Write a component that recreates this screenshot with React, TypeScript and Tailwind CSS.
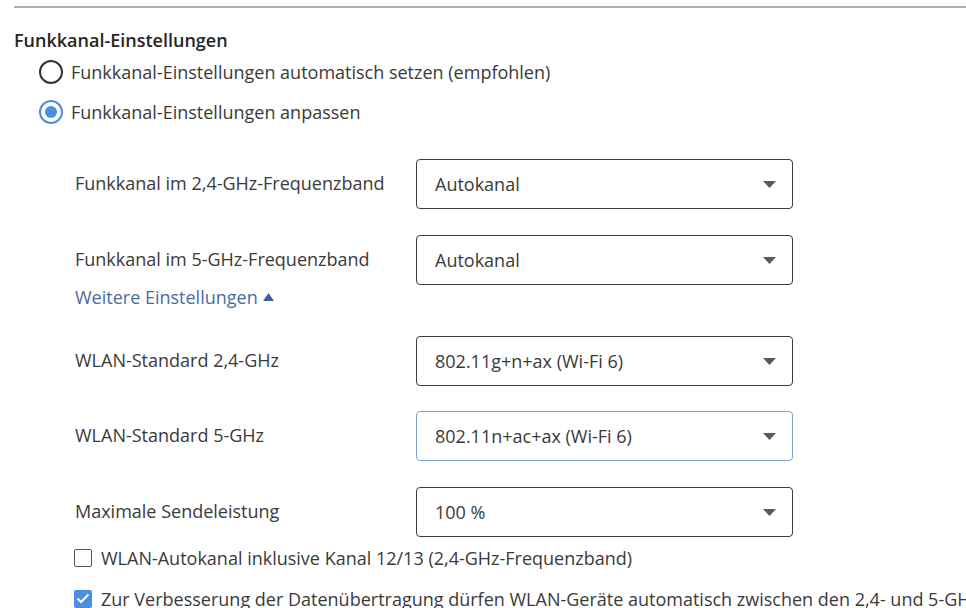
import { useState } from "react";

type SelectRowProps = { label: string, value: string, focused?: boolean }

function SelectRow({ label, value, focused }: SelectRowProps) {
    return (
        <div className="flex items-center h-[50px]">
            <div className="w-[341px] -mt-[3px]">{label}</div>
            <div className={`flex items-center justify-between w-[377px] h-[50px] rounded-[4px] border pl-[18px] pr-[16px] bg-white ${focused ? "border-[#7fa3c8]" : "border-[#3c3c3c]"}`}>
                <span>{value}</span>
                <svg width="13" height="7" viewBox="0 0 13 7">
                    <path d="M0 0 L13 0 L6.5 7 Z" fill="#555a62" />
                </svg>
            </div>
        </div>
    )
}

function Radio({ checked }: { checked: boolean }) {
    return checked ? (
        <span className="flex items-center justify-center w-6 h-6 rounded-full border-2 border-[#4a8fe0] shrink-0">
            <span className="w-[12px] h-[12px] rounded-full bg-[#4a8fe0]"></span>
        </span>
    ) : (
        <span className="w-6 h-6 rounded-full border-2 border-[#333] shrink-0"></span>
    )
}

function Checkbox({ checked }: { checked: boolean }) {
    return checked ? (
        <span className="flex items-center justify-center w-[18px] h-[18px] rounded-[2px] bg-[#4a8fe0] shrink-0">
            <svg width="14" height="11" viewBox="0 0 14 11">
                <path d="M1.5 5.5 L5 9 L12.5 1.5" stroke="white" strokeWidth="2" fill="none" />
            </svg>
        </span>
    ) : (
        <span className="w-[18px] h-[18px] rounded-[2px] border border-[#555] bg-white shrink-0"></span>
    )
}

export default function App() {
    const [custom] = useState(true);

    return (
        <div className="w-[966px] h-[608px] overflow-hidden bg-white text-[#3a3a3a] text-[18px] leading-[24px] font-['Open_Sans',sans-serif]">
            <div className="ml-[14px] mt-[6px] h-[2px] bg-[#a9b0ae]"></div>
            <h3 className="mt-[20px] ml-[14px] font-semibold text-[#262626]">Funkkanal-Einstellungen</h3>
            <div className="ml-[39px] flex flex-col">
                <label className="flex items-center gap-[8px] h-[40px]">
                    <Radio checked={!custom} />
                    <span>Funkkanal-Einstellungen automatisch setzen (empfohlen)</span>
                </label>
                <label className="flex items-center gap-[8px] h-[40px]">
                    <Radio checked={custom} />
                    <span>Funkkanal-Einstellungen anpassen</span>
                </label>
            </div>
            <div className="ml-[75px] mt-[27px] flex flex-col">
                <SelectRow label="Funkkanal im 2,4-GHz-Frequenzband" value="Autokanal" />
                <div className="mt-[26px]">
                    <SelectRow label="Funkkanal im 5-GHz-Frequenzband" value="Autokanal" />
                </div>
                <div className="flex items-center gap-[5px] h-[24px] text-[#4b6c9c]">
                    <span>Weitere Einstellungen</span>
                    <svg width="11" height="8" viewBox="0 0 11 8">
                        <path d="M0 8 L11 8 L5.5 0 Z" fill="#3e6296" />
                    </svg>
                </div>
                <div className="mt-[27px]">
                    <SelectRow label="WLAN-Standard 2,4-GHz" value="802.11g+n+ax (Wi-Fi 6)" />
                </div>
                <div className="mt-[25px]">
                    <SelectRow label="WLAN-Standard 5-GHz" value="802.11n+ac+ax (Wi-Fi 6)" focused />
                </div>
                <div className="mt-[26px]">
                    <SelectRow label="Maximale Sendeleistung" value="100 %" />
                </div>
                <div className="-ml-px flex flex-col">
                    <label className="flex items-center gap-[9px] h-[41px]">
                        <Checkbox checked={false} />
                        <span>WLAN-Autokanal inklusive Kanal 12/13 (2,4-GHz-Frequenzband)</span>
                    </label>
                    <label className="flex items-center gap-[9px] h-[41px] whitespace-nowrap">
                        <Checkbox checked={true} />
                        <span>Zur Verbesserung der Datenübertragung dürfen WLAN-Geräte automatisch zwischen den 2,4- und 5-GHz</span>
                    </label>
                </div>
            </div>
        </div>
    )
}
